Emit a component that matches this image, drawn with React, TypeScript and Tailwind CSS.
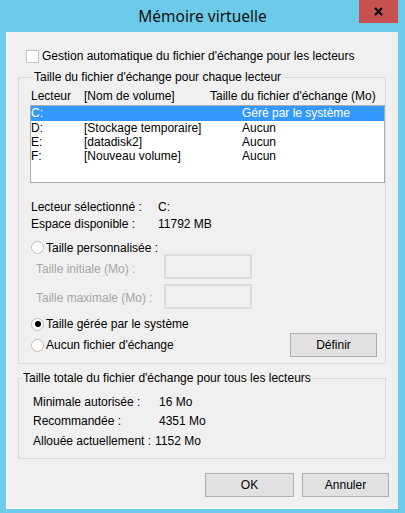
import React from "react";

const drives = [
  { letter: "C:", name: "", size: "Géré par le système", selected: true },
  { letter: "D:", name: "[Stockage temporaire]", size: "Aucun", selected: false },
  { letter: "E:", name: "[datadisk2]", size: "Aucun", selected: false },
  { letter: "F:", name: "[Nouveau volume]", size: "Aucun", selected: false },
];

function Radio({ checked }: { checked?: boolean }) {
  return (
    <span className="w-[13px] h-[13px] rounded-full border border-[#bcbcbc] bg-white flex items-center justify-center shrink-0">
      {checked && <span className="w-[6px] h-[6px] rounded-full bg-black" />}
    </span>
  );
}

export default function App() {
  return (
    <div
      className="w-[405px] h-[513px] bg-[#6dcbea] flex flex-col text-[12px] text-black"
      style={{ fontFamily: '"Liberation Sans", Arial, sans-serif' }}
    >
      {/* Title bar */}
      <div className="h-[32px] flex shrink-0">
        <div className="w-[46px]" />
        <div className="flex-1 text-center leading-[32px] text-[15.5px] text-[#111]" style={{ fontFamily: '"Noto Sans", sans-serif' }}>
          Mémoire virtuelle
        </div>
        <div className="w-[46px] flex justify-end pr-[7px]">
          <div className="w-[39px] h-[23px] bg-[#c75050] flex items-center justify-center">
            <svg width="9" height="9" viewBox="0 0 9 9">
              <path d="M1 1 L8 8 M8 1 L1 8" stroke="#000" strokeWidth="2" />
            </svg>
          </div>
        </div>
      </div>

      {/* Content */}
      <div className="ml-[6px] mr-[7px] h-[477px] bg-[#f0f0f0] border-l border-b border-white flex flex-col">
        <div className="flex items-center h-[14px] mt-[17px] ml-[19px] gap-[3px]">
          <span className="w-[13px] h-[13px] border border-[#c4c4c4] bg-white" />
          <span>Gestion automatique du fichier d'échange pour les lecteurs</span>
        </div>

        <fieldset className="mt-[7px] ml-[11px] mr-[12px] border border-[#dcdcdc] pl-[11px] pb-[6px]">
          <legend className="ml-[3px] px-[1px] leading-[14px]">
            Taille du fichier d'échange pour chaque lecteur
          </legend>
          <div className="flex h-[14px] mt-[5px] pl-[1px] leading-[14px] whitespace-nowrap">
            <span className="w-[53px]">Lecteur</span>
            <span className="w-[126px]">[Nom de volume]</span>
            <span>Taille du fichier d'échange (Mo)</span>
          </div>
          <div className="mt-[2px] h-[78px] border border-[#abadb3] bg-white">
            {drives.map((d) => (
              <div
                key={d.letter}
                className={
                  d.selected
                    ? "flex h-[15px] leading-[15px] bg-[#3399ff] text-white"
                    : "flex h-[14px] leading-[14px]"
                }
              >
                <span className="w-[53px]">{d.letter}</span>
                <span className="w-[158px]">{d.name}</span>
                <span>{d.size}</span>
              </div>
            ))}
          </div>

          <div className="flex h-[14px] leading-[14px] mt-[17px] pl-[1px]">
            <span className="w-[127px]">Lecteur sélectionné :</span>
            <span>C:</span>
          </div>
          <div className="flex h-[14px] leading-[14px] mt-[3px] pl-[1px]">
            <span className="w-[127px]">Espace disponible :</span>
            <span>11792 MB</span>
          </div>

          <div className="flex items-center h-[13px] mt-[10px] pl-[1px] gap-[2px]">
            <Radio />
            <span>Taille personnalisée :</span>
          </div>
          <div className="flex items-start h-[25px] pl-[6px] text-[#a6a6a6]">
            <span className="w-[128px] mt-[8px] leading-[14px]">Taille initiale (Mo) :</span>
            <span className="w-[88px] h-[25px] border-2 border-[#dcdcdc]" />
          </div>
          <div className="flex items-start h-[25px] mt-[5px] pl-[6px] text-[#a6a6a6]">
            <span className="w-[128px] mt-[7px] leading-[14px]">Taille maximale (Mo) :</span>
            <span className="w-[88px] h-[25px] border-2 border-[#dcdcdc]" />
          </div>

          <div className="flex items-center h-[14px] mt-[8px] pl-[1px] gap-[2px]">
            <Radio checked />
            <span>Taille gérée par le système</span>
          </div>
          <div className="flex items-center h-[24px] mt-[2px] pl-[1px] pr-[8px]">
            <Radio />
            <span className="ml-[2px] flex-1">Aucun fichier d'échange</span>
            <button className="w-[87px] h-[24px] bg-[#e1e1e1] border border-[#adadad]">Définir</button>
          </div>
        </fieldset>

        <fieldset className="mt-[7px] ml-[11px] mr-[12px] border border-[#dcdcdc] pl-[14px] pb-[10px]">
          <legend className="ml-[-11px] px-[1px] leading-[14px]">
            Taille totale du fichier d'échange pour tous les lecteurs
          </legend>
          <div className="flex h-[14px] leading-[14px] mt-[10px]">
            <span className="w-[126px]">Minimale autorisée :</span>
            <span>16 Mo</span>
          </div>
          <div className="flex h-[14px] leading-[14px] mt-[5px]">
            <span className="w-[126px]">Recommandée :</span>
            <span>4351 Mo</span>
          </div>
          <div className="flex h-[14px] leading-[14px] mt-[6px] gap-[4px]">
            <span>Allouée actuellement :</span>
            <span>1152 Mo</span>
          </div>
        </fieldset>

        <div className="flex justify-end gap-[8px] mt-[14px] pr-[9px]">
          <button className="w-[89px] h-[24px] bg-[#e1e1e1] border border-[#adadad]">OK</button>
          <button className="w-[87px] h-[24px] bg-[#e1e1e1] border border-[#adadad]">Annuler</button>
        </div>
      </div>
    </div>
  );
}
